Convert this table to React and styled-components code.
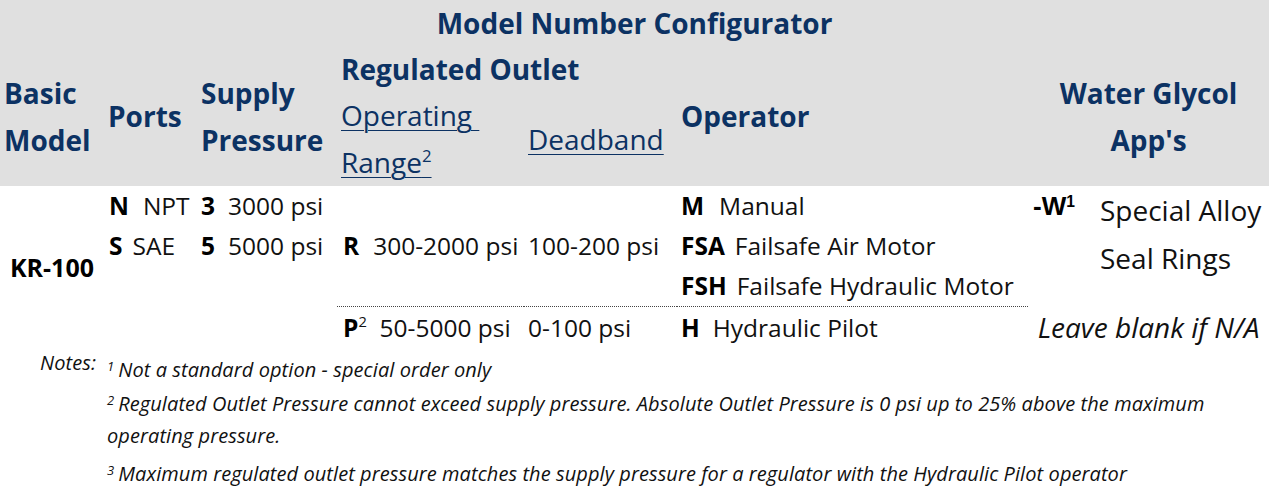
import styled, { createGlobalStyle } from "styled-components";

const GlobalStyle = createGlobalStyle`
  html, body {
    margin: 0;
    padding: 0;
    background: #ffffff;
  }
  body {
    font-family: "Open Sans", "Liberation Sans", sans-serif;
    color: #111111;
  }
`;

const Table = styled.table`
  width: 1269px;
  border-collapse: collapse;
  table-layout: fixed;
`;

const Head = styled.thead`
  background: #e0e0e0;
`;

const Th = styled.th`
  padding: 0 4px;
  font-size: 28px;
  line-height: ${(p) => p.lh || 47}px;
  font-weight: 700;
  color: #0c3263;
  text-align: ${(p) => p.align || "left"};
  vertical-align: ${(p) => p.valign || "middle"};
  white-space: nowrap;
`;

const SubHead = styled.u`
  font-weight: 400;
  text-decoration-thickness: 1px;
  text-underline-offset: 4px;
`;

const Sup = styled.sup`
  font-size: 0.6em;
  line-height: 0;
  vertical-align: ${(p) => p.raise || "0.65em"};
`;

const Td = styled.td`
  padding: 0 4px 0 ${(p) => p.pad || 4}px;
  font-size: 24.5px;
  line-height: 40px;
  text-align: ${(p) => p.align || "left"};
  vertical-align: ${(p) => p.valign || "middle"};
  white-space: nowrap;
  border-top: ${(p) => (p.divider ? "1px dotted #444" : "none")};
`;

const Code = styled.b`
  font-weight: 700;
  color: #000;
  margin-right: ${(p) => p.gap || 0}px;
`;

const Model = styled.b`
  font-weight: 700;
  font-size: 25px;
  color: #000;
`;

const WCode = styled.b`
  font-family: "Liberation Sans", Arial, sans-serif;
  font-weight: 700;
  font-size: 26px;
  color: #000;
`;

const Alloy = styled.div`
  font-size: 28px;
  line-height: 48px;
  color: #111;
`;

const Blank = styled.i`
  font-size: 28px;
  color: #111;
`;

const Notes = styled.div`
  display: grid;
  grid-template-columns: 104px 1fr;
  font-style: italic;
  font-size: 20px;
  letter-spacing: 0.08px;
  color: #111;
`;

const NotesLabel = styled.div`
  text-align: right;
  padding-right: 8px;
  line-height: 28px;
`;

const NoteList = styled.div`
  padding: 5px 0 0 3px;
  display: flex;
  flex-direction: column;
  gap: 2px;
`;

const Note = styled.p`
  margin: ${(p) => (p.spaced ? "4px 0 0" : "0")};
  line-height: 32px;
`;

const NoteSup = styled.sup`
  font-size: 13px;
  line-height: 0;
  vertical-align: 0.45em;
  margin-right: 4px;
`;

export default function App() {
  return (
    <>
      <GlobalStyle />
      <Table>
        <colgroup>
          <col style={{ width: 104 }} />
          <col style={{ width: 93 }} />
          <col style={{ width: 140 }} />
          <col style={{ width: 187 }} />
          <col style={{ width: 153 }} />
          <col style={{ width: 351 }} />
          <col style={{ width: 68 }} />
          <col style={{ width: 173 }} />
        </colgroup>
        <Head>
          <tr>
            <Th colSpan={8} align="center">
              Model Number Configurator
            </Th>
          </tr>
          <tr>
            <Th rowSpan={2}>
              Basic
              <br />
              Model
            </Th>
            <Th rowSpan={2}>Ports</Th>
            <Th rowSpan={2}>
              Supply
              <br />
              Pressure
            </Th>
            <Th colSpan={2} lh={45}>
              Regulated Outlet
            </Th>
            <Th rowSpan={2}>Operator</Th>
            <Th rowSpan={2} colSpan={2} align="center">
              Water Glycol
              <br />
              App's
            </Th>
          </tr>
          <tr>
            <Th valign="top">
              <SubHead>
                Operating&nbsp;
                <br />
                Range<Sup>2</Sup>
              </SubHead>
            </Th>
            <Th>
              <SubHead>Deadband</SubHead>
            </Th>
          </tr>
        </Head>
        <tbody>
          <tr>
            <Td rowSpan={4} align="center">
              <Model>KR-100</Model>
            </Td>
            <Td pad={5}>
              <Code gap={14}>N</Code>NPT
            </Td>
            <Td>
              <Code gap={13}>3</Code>3000 psi
            </Td>
            <Td rowSpan={3} pad={6}>
              <Code gap={14}>R</Code>300-2000 psi
            </Td>
            <Td rowSpan={3}>100-200 psi</Td>
            <Td>
              <Code gap={15}>M</Code>Manual
            </Td>
            <Td rowSpan={3} valign="top" pad={5}>
              <WCode>
                -W<Sup raise="0.5em">1</Sup>
              </WCode>
            </Td>
            <Td rowSpan={3} valign="top">
              <Alloy>
                Special Alloy
                <br />
                Seal Rings
              </Alloy>
            </Td>
          </tr>
          <tr>
            <Td pad={5}>
              <Code gap={10}>S</Code>SAE
            </Td>
            <Td>
              <Code gap={13}>5</Code>5000 psi
            </Td>
            <Td>
              <Code gap={10}>FSA</Code>Failsafe Air Motor
            </Td>
          </tr>
          <tr>
            <Td />
            <Td />
            <Td>
              <Code gap={10}>FSH</Code>Failsafe Hydraulic Motor
            </Td>
          </tr>
          <tr>
            <Td />
            <Td />
            <Td divider pad={6}>
              <Code>P</Code>
              <Sup>2</Sup>&nbsp; 50-5000 psi
            </Td>
            <Td divider>0-100 psi</Td>
            <Td divider>
              <Code gap={13}>H</Code>Hydraulic Pilot
            </Td>
            <Td colSpan={2} align="center">
              <Blank>Leave blank if N/A</Blank>
            </Td>
          </tr>
        </tbody>
      </Table>
      <Notes>
        <NotesLabel>Notes:</NotesLabel>
        <NoteList>
          <Note>
            <NoteSup>1</NoteSup>Not a standard option - special order only
          </Note>
          <Note>
            <NoteSup>2</NoteSup>Regulated Outlet Pressure cannot exceed supply
            pressure. Absolute Outlet Pressure is 0 psi up to 25% above the
            maximum operating pressure.
          </Note>
          <Note spaced>
            <NoteSup>3</NoteSup>Maximum regulated outlet pressure matches the
            supply pressure for a regulator with the Hydraulic Pilot operator
          </Note>
        </NoteList>
      </Notes>
    </>
  );
}
